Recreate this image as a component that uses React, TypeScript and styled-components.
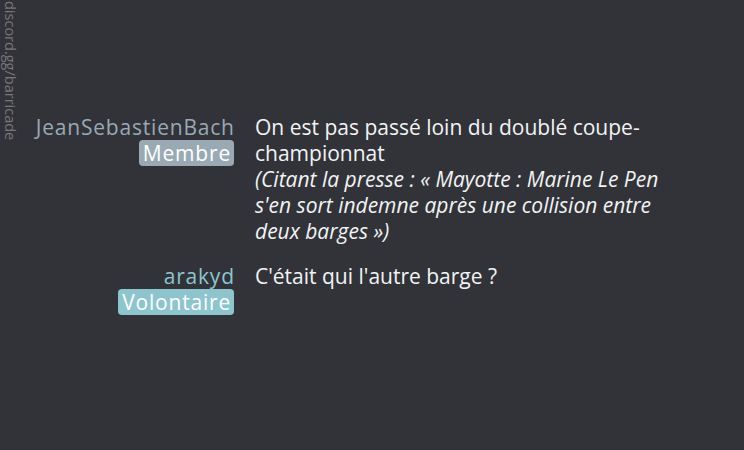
import { FunctionComponent, ReactElement } from 'react'
import styled, { createGlobalStyle } from 'styled-components'

interface ChatMessage {
  id: number;
  author: string;
  role: string;
  color: string;
  lines: { text: string; quote?: boolean }[];
}

const messages: ChatMessage[] = [
  {
    id: 1,
    author: 'JeanSebastienBach',
    role: 'Membre',
    color: '#99aab5',
    lines: [
      { text: 'On est pas passé loin du doublé coupe-championnat' },
      { text: '(Citant la presse : « Mayotte : Marine Le Pen s\'en sort indemne après une collision entre deux barges »)', quote: true },
    ],
  },
  {
    id: 2,
    author: 'arakyd',
    role: 'Volontaire',
    color: '#8dc5cf',
    lines: [{ text: 'C\'était qui l\'autre barge ?' }],
  },
]

const GlobalStyle = createGlobalStyle`
  html, body {
    margin: 0;
    padding: 0;
    background-color: #313338;
  }
  body {
    font-family: "Open Sans", "Noto Sans", sans-serif;
  }
`

const Page = styled.div`
  position: relative;
  width: 744px;
  height: 450px;
  overflow: hidden;
  background-color: #313338;
  box-sizing: border-box;
  padding-top: 114px;
`

const Watermark = styled.div`
  position: absolute;
  top: 1px;
  left: 1px;
  writing-mode: vertical-rl;
  font-size: 14.5px;
  line-height: 18px;
  color: #75777d;
`

const Feed = styled.div`
  display: flex;
  flex-direction: column;
  gap: 19px;
`

const Row = styled.div`
  display: grid;
  grid-template-columns: 234px 420px;
  column-gap: 21px;
  font-size: 21px;
  line-height: 26px;
`

const AuthorColumn = styled.div`
  display: flex;
  flex-direction: column;
  align-items: flex-end;
  letter-spacing: 0.8px;
`

const AuthorName = styled.span<{ $color: string }>`
  color: ${props => props.$color};
  margin-right: -0.8px;
`

const RoleBadge = styled.span<{ $color: string }>`
  display: inline-block;
  height: 26px;
  line-height: 26px;
  background-color: ${props => props.$color};
  color: #ffffff;
  border-radius: 4px;
  padding: 0 3px 0 4px;
`

const MessageBody = styled.div`
  color: #f2f3f5;
`

const Line = styled.div<{ $quote?: boolean }>`
  font-style: ${props => (props.$quote ? 'italic' : 'normal')};
`

const App: FunctionComponent = (): ReactElement => (
  <>
    <GlobalStyle />
    <Page>
      <Watermark>discord.gg/barricade</Watermark>
      <Feed>
        {messages.map(message => (
          <Row key={message.id}>
            <AuthorColumn>
              <AuthorName $color={message.color}>{message.author}</AuthorName>
              <RoleBadge $color={message.color}>{message.role}</RoleBadge>
            </AuthorColumn>
            <MessageBody>
              {message.lines.map((line, i) => (
                <Line key={i} $quote={line.quote}>{line.text}</Line>
              ))}
            </MessageBody>
          </Row>
        ))}
      </Feed>
    </Page>
  </>
)

export default App
